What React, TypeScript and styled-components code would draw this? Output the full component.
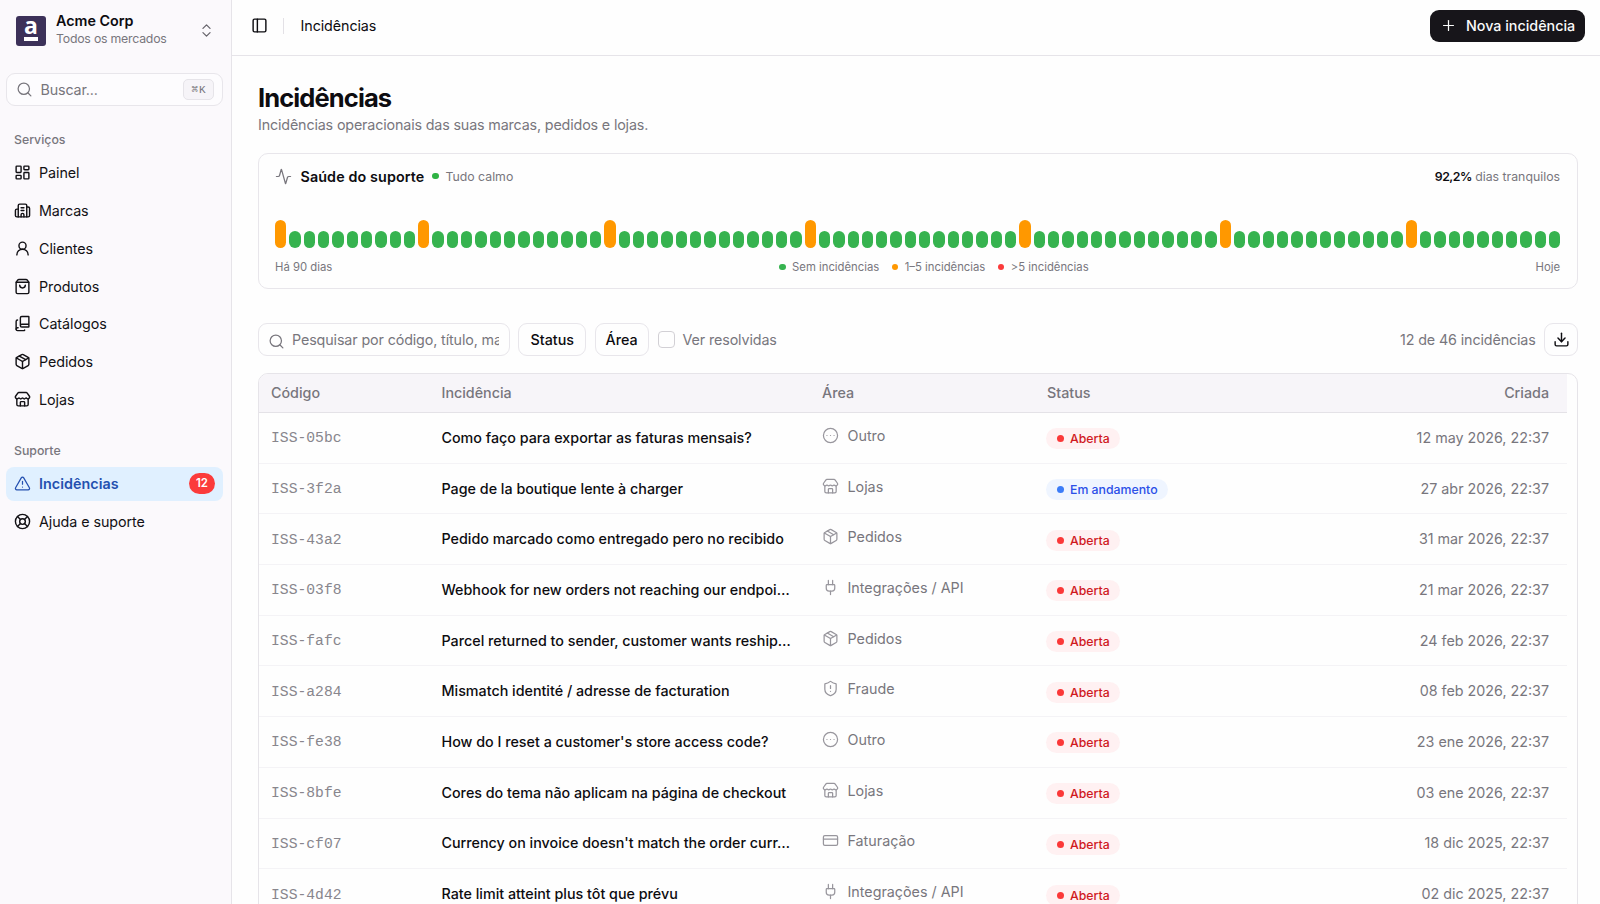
import { ReactNode } from 'react'
import styled, { createGlobalStyle } from 'styled-components';
import {
  Activity, BookCopy, Building2, ChevronsUpDown, CircleEllipsis, CreditCard, Download, LayoutDashboard,
  LifeBuoy, LucideIcon, Package, PanelLeft, Plug, Plus, Search, ShieldAlert, ShoppingBag, Store,
  TriangleAlert, UserRound,
} from 'lucide-react'

const GlobalStyle = createGlobalStyle`
  * { box-sizing: border-box; }
  html, body {
    margin: 0;
    overflow: hidden;
    background: #fefefe;
  }
  body, input, button {
    font-family: Inter, "Liberation Sans", sans-serif;
    font-size: 14.3px;
    color: #0d0c10;
  }
  svg { flex-shrink: 0; }
`
const Page = styled.div`
  display: flex;
  width: 100%;
  height: 904px;
  overflow: hidden;
`
const Sidebar = styled.aside`
  width: 232px;
  flex-shrink: 0;
  padding: 0 8px 0 6px;
  background: #fbf9fc;
  border-right: 1px solid #e6e4e9;
`
const Account = styled.div`
  display: flex;
  align-items: center;
  height: 61px;
  margin-bottom: 12px;
  padding: 0 8px 0 10px;
`
const AccountText = styled.div`
  flex: 1;
  margin-left: 10px;
  padding-bottom: 3px;
`
const AccountName = styled.div`
  font-weight: 600;
  font-size: 14.3px;
  line-height: 18px;
`
const AccountSub = styled.div`
  font-size: 12.3px;
  line-height: 17px;
  letter-spacing: -0.22px;
  color: #78767d;
`
const SideSearch = styled.div`
  display: flex;
  align-items: center;
  height: 33px;
  padding: 0 8px 0 9px;
  border: 1px solid #e8e6eb;
  border-radius: 9px;
  background: #fdfcfe;
  color: #77757c;
`
const SideSearchText = styled.span`
  flex: 1;
  margin-left: 7.5px;
  letter-spacing: -0.15px;
`
const Kbd = styled.kbd`
  display: flex;
  align-items: center;
  justify-content: center;
  width: 31px;
  height: 21px;
  gap: 1px;
  border: 1px solid #e6e4e9;
  border-radius: 5px;
  background: #f6f4f8;
  font: 500 11px "Liberation Mono", "DejaVu Sans Mono", monospace;
`
const GroupLabel = styled.div<{ first?: boolean }>`
  margin-top: ${props => props.first ? "26px" : "26px"};
  height: 16px;
  padding-left: 8px;
  font-size: 12.3px;
  font-weight: 500;
  line-height: 16px;
  color: #78767d;
`
const Nav = styled.nav`
  display: flex;
  flex-direction: column;
  gap: 4.3px;
  margin-top: 8.5px;
`
const NavItem = styled.a<{ active?: boolean }>`
  display: flex;
  align-items: center;
  height: 33.5px;
  padding: 0 8px 1px 8px;
  border-radius: 8px;
  gap: 8px;
  background: ${props => props.active ? "#e0f0ff" : "transparent"};
  color: ${props => props.active ? "#2450b0" : "#121115"};
  font-weight: ${props => props.active ? 600 : 400};
  letter-spacing: ${props => props.active ? "0.05px" : "-0.06px"};
`
const NavBadge = styled.span`
  width: 26px;
  height: 21px;
  margin-left: auto;
  border-radius: 11px;
  background: #fb3b3b;
  color: #fff;
  font-size: 11.5px;
  font-weight: 600;
  line-height: 21px;
  text-align: center;
`
const Main = styled.main`
  flex: 1;
  min-width: 0;
`
const Header = styled.header`
  display: flex;
  align-items: center;
  height: 56px;
  padding: 0 15px 4px 19px;
  border-bottom: 1px solid #e6e4e9;
`
const Separator = styled.span`
  width: 1px;
  height: 16px;
  margin: 0 17px 0 14.5px;
  background: #e3e1e6;
`
const HeaderTitle = styled.span`
  letter-spacing: -0.08px;
`
const NewButton = styled.button`
  display: flex;
  align-items: center;
  height: 32px;
  width: 155px;
  margin-left: auto;
  padding: 0 0 1px 10px;
  gap: 9px;
  border: 0;
  border-radius: 9px;
  background: #17151a;
  color: #fafafa;
  font-weight: 500;
`
const Content = styled.div`
  padding: 26px 22px 0 26px;
`
const Title = styled.h1`
  margin: 0;
  font-size: 25.5px;
  font-weight: 700;
  line-height: 32px;
  letter-spacing: -0.9px;
`
const Subtitle = styled.p`
  height: 22px;
  margin: 0;
  line-height: 21px;
  letter-spacing: -0.15px;
  color: #78767d;
`
const HealthCard = styled.section`
  height: 136px;
  margin-top: 17px;
  padding: 14px 17px 0 16px;
  border: 1px solid #e8e6eb;
  border-radius: 10px;
`
const HealthHead = styled.div`
  display: flex;
  align-items: center;
  height: 17px;
  padding-bottom: 1px;
  color: #78767d;
`
const HealthTitle = styled.span`
  margin: 0 8px 0 8.5px;
  color: #0d0c10;
  font-weight: 600;
  letter-spacing: 0.12px;
`
const Small = styled.span`
  font-size: 12.3px;
`
const Strong = styled.b`
  color: #0d0c10;
  font-weight: 600;
  letter-spacing: -0.5px;
`
const Spacer = styled.span`
  flex: 1;
`
const Dot = styled.span<{ color: string; size?: number }>`
  width: ${props => props.size || 6.5}px;
  height: ${props => props.size || 6.5}px;
  margin-right: 6.5px;
  flex-shrink: 0;
  border-radius: 50%;
  background: ${props => props.color};
`
const Bars = styled.div`
  display: flex;
  align-items: flex-end;
  gap: 3px;
  height: 29px;
  margin-top: 34px;
`
const Bar = styled.span<{ busy: boolean }>`
  flex: 1;
  height: ${props => props.busy ? "28.5px" : "17px"};
  border-radius: 6px;
  background: ${props => props.busy ? "#ff9800" : "#36b34f"};
`
const BarsFoot = styled.div`
  display: flex;
  justify-content: space-between;
  margin-top: 11px;
  font-size: 11.3px;
  line-height: 16px;
  color: #78767d;
`
const Legend = styled.div`
  display: flex;
  gap: 12.5px;
`
const LegendItem = styled.span`
  display: flex;
  align-items: center;
`
const Toolbar = styled.div`
  display: flex;
  align-items: center;
  height: 33px;
  margin-top: 34px;
  color: #78767d;
`
const SearchBox = styled.label`
  display: flex;
  align-items: center;
  width: 252px;
  height: 33px;
  padding: 0 10px 0 9px;
  border: 1px solid #e8e6eb;
  border-radius: 9px;
  svg { margin-top: 3px; }
`
const SearchInput = styled.input`
  flex: 1;
  min-width: 0;
  margin-left: 7px;
  padding: 0;
  border: 0;
  outline: 0;
  background: transparent;
  letter-spacing: -0.12px;
  &::placeholder { color: #78767d; opacity: 1; }
`
const OutlineButton = styled.button<{ width: number }>`
  display: flex;
  align-items: center;
  justify-content: center;
  width: ${props => props.width}px;
  height: 33px;
  margin-left: 8.3px;
  padding: 0;
  border: 1px solid #e8e6eb;
  border-radius: 9px;
  background: #fefefe;
  font-weight: 500;
`
const Checkbox = styled.span`
  width: 17px;
  height: 17px;
  margin: 0 8px 0 9px;
  border: 1px solid #d2d0d5;
  border-radius: 4px;
`
const ToolbarText = styled.span`
  letter-spacing: -0.12px;
`
const TableCard = styled.section`
  height: 600px;
  margin-top: 17px;
  padding-right: 10px;
  border: 1px solid #e6e4e9;
  border-radius: 10px;
  overflow: hidden;
`
const Row = styled.div<{ head?: boolean }>`
  display: grid;
  grid-template-columns: 170.5px 380.5px 225px 1fr 200px;
  align-items: center;
  height: ${props => props.head ? "39px" : "50.7px"};
  padding: 0 18px ${props => props.head ? 2 : 1}px 12px;
  background: ${props => props.head ? "#f7f5f9" : "transparent"};
  border-bottom: 1px solid ${props => props.head ? "#e4e2e7" : "#f4f3f6"};
  color: #78767d;
  font-weight: ${props => props.head ? 500 : 400};
`
const Code = styled.span`
  padding-top: 2px;
  font-family: "Liberation Mono", monospace;
  font-size: 14.7px;
  color: #88868d;
`
const IssueTitle = styled.span`
  color: #0d0c10;
  font-weight: 500;
  white-space: nowrap;
`
const Area = styled.span`
  display: flex;
  align-items: center;
  gap: 8.5px;
  padding-bottom: 4px;
  svg { color: #98969d; }
`
const Created = styled.span`
  text-align: right;
`
const StatusBadge = styled.span<{ progress: boolean }>`
  display: inline-flex;
  align-items: center;
  justify-self: start;
  height: 21px;
  margin: 3px 0 0 -1px;
  padding: 0 10.5px;
  border-radius: 11px;
  background: ${props => props.progress ? "#eff5ff" : "#fff1f2"};
  color: ${props => props.progress ? "#2b50e8" : "#d0191f"};
  font-size: 12.3px;
  font-weight: 500;
`

const services: [LucideIcon, string][] = [
  [LayoutDashboard, 'Painel'],
  [Building2, 'Marcas'],
  [UserRound, 'Clientes'],
  [ShoppingBag, 'Produtos'],
  [BookCopy, 'Catálogos'],
  [Package, 'Pedidos'],
  [Store, 'Lojas'],
]

const areaIcons: Record<string, LucideIcon> = {
  'Outro': CircleEllipsis,
  'Lojas': Store,
  'Pedidos': Package,
  'Integrações / API': Plug,
  'Fraude': ShieldAlert,
  'Faturação': CreditCard,
}

const issues = [
  ['ISS-05bc', 'Como faço para exportar as faturas mensais?', 'Outro', 'Aberta', '12 may 2026, 22:37'],
  ['ISS-3f2a', 'Page de la boutique lente à charger', 'Lojas', 'Em andamento', '27 abr 2026, 22:37'],
  ['ISS-43a2', 'Pedido marcado como entregado pero no recibido', 'Pedidos', 'Aberta', '31 mar 2026, 22:37'],
  ['ISS-03f8', 'Webhook for new orders not reaching our endpoi…', 'Integrações / API', 'Aberta', '21 mar 2026, 22:37'],
  ['ISS-fafc', 'Parcel returned to sender, customer wants reship…', 'Pedidos', 'Aberta', '24 feb 2026, 22:37'],
  ['ISS-a284', 'Mismatch identité / adresse de facturation', 'Fraude', 'Aberta', '08 feb 2026, 22:37'],
  ['ISS-fe38', "How do I reset a customer's store access code?", 'Outro', 'Aberta', '23 ene 2026, 22:37'],
  ['ISS-8bfe', 'Cores do tema não aplicam na página de checkout', 'Lojas', 'Aberta', '03 ene 2026, 22:37'],
  ['ISS-cf07', "Currency on invoice doesn't match the order curr…", 'Faturação', 'Aberta', '18 dic 2025, 22:37'],
  ['ISS-4d42', 'Rate limit atteint plus tôt que prévu', 'Integrações / API', 'Aberta', '02 dic 2025, 22:37'],
]

const busyDays = [0, 10, 23, 37, 52, 66, 79]
const days = Array.from({ length: 90 }, (_, i) => busyDays.includes(i))

const LogoBox = styled.div`
  display: flex;
  flex-direction: column;
  align-items: center;
  width: 30px;
  height: 30px;
  border-radius: 3px;
  background: #3c3159;
  color: #fff;
  font: 700 23px/21px "Open Sans", "Noto Sans", sans-serif;
  &::after {
    content: "";
    width: 14.5px;
    height: 4px;
    background: #fff;
  }
`
const LogoLetter = styled.span`
  height: 21px;
  line-height: 19px;
`

const LegendEntry = ({ color, children }: { color: string; children: ReactNode }) => (
  <LegendItem><Dot color={color} />{children}</LegendItem>
)

const IssueRow = ({ issue }: { issue: string[] }) => {
  const [code, title, area, status, created] = issue
  const Icon = areaIcons[area]
  const progress = status !== 'Aberta'
  return (
    <Row>
      <Code>{code}</Code>
      <IssueTitle>{title}</IssueTitle>
      <Area><Icon size={17} strokeWidth={1.75} />{area}</Area>
      <StatusBadge progress={progress}>
        <Dot color={progress ? '#3b7cf8' : '#fb3838'} size={7} />{status}
      </StatusBadge>
      <Created>{created}</Created>
    </Row>
  )
}

const App = () => {
  return (
    <Page>
      <GlobalStyle />
      <Sidebar>
        <Account>
          <LogoBox><LogoLetter>a</LogoLetter></LogoBox>
          <AccountText>
            <AccountName>Acme Corp</AccountName>
            <AccountSub>Todos os mercados</AccountSub>
          </AccountText>
          <ChevronsUpDown size={17} strokeWidth={1.75} color="#66646b" />
        </Account>
        <SideSearch>
          <Search size={17} strokeWidth={1.75} />
          <SideSearchText>Buscar...</SideSearchText>
          <Kbd><span>⌘</span><span>K</span></Kbd>
        </SideSearch>
        <GroupLabel first>Serviços</GroupLabel>
        <Nav>
          {services.map(([Icon, label]) => (
            <NavItem key={label}><Icon size={17} />{label}</NavItem>
          ))}
        </Nav>
        <GroupLabel>Suporte</GroupLabel>
        <Nav>
          <NavItem active><TriangleAlert size={17} strokeWidth={1.75} />Incidências<NavBadge>12</NavBadge></NavItem>
          <NavItem><LifeBuoy size={17} />Ajuda e suporte</NavItem>
        </Nav>
      </Sidebar>
      <Main>
        <Header>
          <PanelLeft size={17} />
          <Separator />
          <HeaderTitle>Incidências</HeaderTitle>
          <NewButton><Plus size={17} strokeWidth={1.75} />Nova incidência</NewButton>
        </Header>
        <Content>
          <Title>Incidências</Title>
          <Subtitle>Incidências operacionais das suas marcas, pedidos e lojas.</Subtitle>
          <HealthCard>
            <HealthHead>
              <Activity size={17} strokeWidth={1.75} />
              <HealthTitle>Saúde do suporte</HealthTitle>
              <Dot color="#2fb344" />
              <Small>Tudo calmo</Small>
              <Spacer />
              <Small><Strong>92,2%</Strong> dias tranquilos</Small>
            </HealthHead>
            <Bars>
              {days.map((busy, i) => <Bar key={i} busy={busy} />)}
            </Bars>
            <BarsFoot>
              <span>Há 90 dias</span>
              <Legend>
                <LegendEntry color="#36b34f">Sem incidências</LegendEntry>
                <LegendEntry color="#ff9800">1–5 incidências</LegendEntry>
                <LegendEntry color="#fb3b3b">&gt;5 incidências</LegendEntry>
              </Legend>
              <span>Hoje</span>
            </BarsFoot>
          </HealthCard>
          <Toolbar>
            <SearchBox>
              <Search size={17} strokeWidth={1.75} />
              <SearchInput placeholder="Pesquisar por código, título, marca..." />
            </SearchBox>
            <OutlineButton width={68}>Status</OutlineButton>
            <OutlineButton width={54}>Área</OutlineButton>
            <Checkbox />
            <ToolbarText>Ver resolvidas</ToolbarText>
            <Spacer />
            <ToolbarText>12 de 46 incidências</ToolbarText>
            <OutlineButton width={34}><Download size={17} /></OutlineButton>
          </Toolbar>
          <TableCard>
            <Row head>
              <span>Código</span>
              <span>Incidência</span>
              <span>Área</span>
              <span>Status</span>
              <Created>Criada</Created>
            </Row>
            {issues.map(issue => <IssueRow key={issue[0]} issue={issue} />)}
          </TableCard>
        </Content>
      </Main>
    </Page>
  )
}

export default App;
